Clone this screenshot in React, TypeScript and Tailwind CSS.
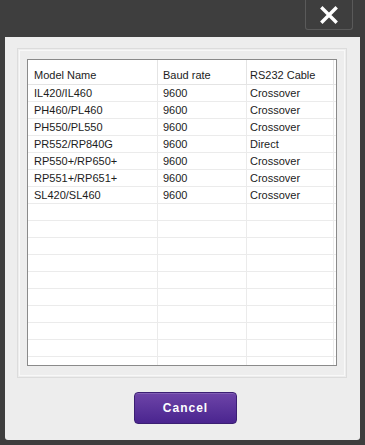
import React from "react";

interface IModel {
    name: string;
    baud: string;
    cable: string;
}

const models: IModel[] = [
    { name: "IL420/IL460", baud: "9600", cable: "Crossover" },
    { name: "PH460/PL460", baud: "9600", cable: "Crossover" },
    { name: "PH550/PL550", baud: "9600", cable: "Crossover" },
    { name: "PR552/RP840G", baud: "9600", cable: "Direct" },
    { name: "RP550+/RP650+", baud: "9600", cable: "Crossover" },
    { name: "RP551+/RP651+", baud: "9600", cable: "Crossover" },
    { name: "SL420/SL460", baud: "9600", cable: "Crossover" },
];

const cellCls = "h-[17px] border-b border-r border-[#ebebeb] leading-[16px] whitespace-nowrap overflow-hidden";

function Row({ model }: { model?: IModel }): React.ReactElement {
    return (
        <>
            <div className={cellCls + " pl-[6px]"}>{model?.name}</div>
            <div className={cellCls + " pl-[5px]"}>{model?.baud}</div>
            <div className={cellCls + " pl-[3px]"}>{model?.cable}</div>
            <div className="h-[17px] border-b border-[#ebebeb]" />
        </>
    );
}

function App(): React.ReactElement {
    const emptyRows = Array.from({ length: 10 });

    return (
        <div className="w-[365px] h-[445px] bg-[#3e3e3e] overflow-hidden" style={{ fontFamily: '"Liberation Sans", Arial, sans-serif' }}>
            <div className="h-[37px] flex justify-end pr-[12px]">
                <button className="w-[48px] h-[30px] border border-t-0 border-[#5a5a5a] rounded-b-[3px] flex items-center justify-center">
                    <svg width="18" height="18" viewBox="0 0 18 18">
                        <path d="M2.5 2.5 L15.5 15.5 M15.5 2.5 L2.5 15.5" stroke="#ffffff" strokeWidth="3.4" strokeLinecap="square" />
                    </svg>
                </button>
            </div>
            <div className="mx-[5px] h-[403px] bg-[#ededed] rounded-b-[3px] pt-[11px] px-[12px]">
                {/* group box */}
                <div className="w-[330px] h-[330px] border border-[#dcdcdc] p-[1px]">
                    <div className="w-full h-full border border-[#f8f8f8] pt-[8px] pl-[7px]">
                        {/* table */}
                        <div className="w-[310px] h-[307px] bg-white border border-[#8a8a8a] overflow-hidden text-[11px] text-[#1c1c1c]">
                            <div className="grid grid-cols-[130px_89px_87px_1fr]">
                                <div className="h-[25px] border-b border-r border-[#e4e4e4] pl-[6px] pt-[8px] leading-[14px]">Model Name</div>
                                <div className="h-[25px] border-b border-r border-[#e4e4e4] pl-[5px] pt-[8px] leading-[14px]">Baud rate</div>
                                <div className="h-[25px] border-b border-r border-[#e4e4e4] pl-[3px] pt-[8px] leading-[14px]">RS232 Cable</div>
                                <div className="h-[25px] border-b border-[#e4e4e4]" />
                                {models.map((m) => (
                                    <Row key={m.name} model={m} />
                                ))}
                                {emptyRows.map((_, i) => (
                                    <Row key={i} />
                                ))}
                            </div>
                        </div>
                    </div>
                </div>
                <div className="flex justify-center pl-[6px] mt-[14px]">
                    <button className="w-[103px] h-[32px] rounded-[4px] border border-[#3b1f73] bg-gradient-to-b from-[#6e44a8] to-[#4a248f] text-white text-[12px] font-bold tracking-[1px] shadow-[inset_0_1px_0_rgba(255,255,255,0.15)]">
                        Cancel
                    </button>
                </div>
            </div>
        </div>
    );
}

export default App;
